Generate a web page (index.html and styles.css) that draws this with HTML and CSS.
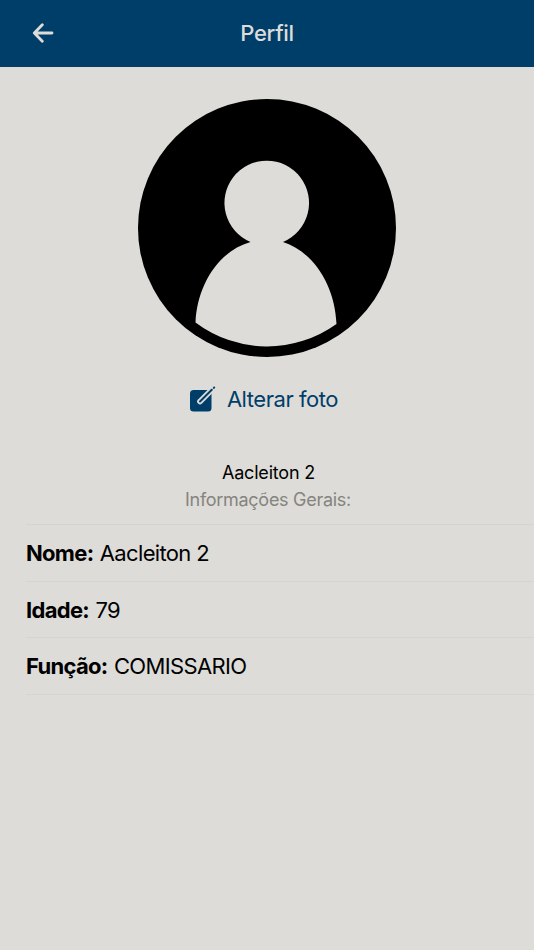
FILE: index.html
```html
<!DOCTYPE html>
<html lang="pt-BR">
<head>
<meta charset="utf-8">
<title>Perfil</title>
<link rel="stylesheet" href="styles.css">
</head>
<body>
<header class="toolbar">
  <button class="back" aria-label="Voltar">
    <svg width="22" height="20" viewBox="0 0 22 20"><path d="M10.300 1.800L2.300 10l8 8.200M2.800 10H20" fill="none" stroke="currentColor" stroke-width="2.800" stroke-linecap="round" stroke-linejoin="round"/></svg>
  </button>
  <h1 class="title">Perfil</h1>
</header>
<main>
  <svg class="avatar" viewBox="0 0 258 258">
    <circle class="disc" cx="129" cy="129" r="129"/>
    <path class="person" d="M112.500 143A42.300 42.300 0 1 1 145 143C176 153 197 187 198.500 225A119 119 0 0 1 57.500 223.500C59 187 80 152 112.500 143Z"/>
  </svg>
  <button class="change">
    <svg width="28" height="28" viewBox="0 0 28 28">
      <rect class="pad" x="1" y="5" width="21.500" height="21.600" rx="3.500"/>
      <path class="gap" d="M11 16.500L24 3.500"/>
      <path class="pencil" d="M11 16.500L22.800 4.700M24.800 2.900L25.200 2.500"/>
    </svg>
    <span>Alterar foto</span>
  </button>
  <div class="summary">
    <p class="name">Aacleiton 2</p>
    <p class="subtitle">Informações Gerais:</p>
  </div>
  <ul class="info">
    <li><b>Nome:</b> <span>Aacleiton 2</span></li>
    <li><b>Idade:</b> <span>79</span></li>
    <li><b>Função:</b> <span>COMISSARIO</span></li>
  </ul>
</main>
</body>
</html>
```

FILE: styles.css
```css
* { box-sizing: border-box; }
body { margin: 0; min-height: 950px; background: #dddcd8; color: #000; font-family: Inter, "Liberation Sans", sans-serif; }
button { border: 0; padding: 0; background: none; font: inherit; color: inherit; }
.toolbar { height: 67px; padding-bottom: 1px; display: grid; grid-template-columns: 86px 1fr 86px; align-items: center; background: #003e6a; color: #dddcd8; }
.back { display: flex; padding-left: 32px; }
.title { margin: 0; text-align: center; font-size: 22px; line-height: 28px; font-weight: 500; letter-spacing: -0.3px; }
main { display: flex; flex-direction: column; align-items: center; padding-top: 32px; }
.avatar { width: 258px; height: 258px; }
.disc { fill: #000; }
.person { fill: #dddcd8; }
.change { display: flex; align-items: center; gap: 10px; height: 32px; margin: 26px 7px 0 0; color: #003e6a; font-size: 22px; letter-spacing: -0.45px; }
.change span { padding-bottom: 1px; }
.pad { fill: currentColor; }
.gap { fill: none; stroke: #dddcd8; stroke-width: 5.600; stroke-linecap: round; }
.pencil { fill: none; stroke: currentColor; stroke-width: 2; stroke-linecap: round; }
.summary { margin-top: 44px; text-align: center; }
.summary p { margin: 0; font-size: 18px; line-height: 27px; }
.summary .name { padding-left: 3px; letter-spacing: -0.2px; }
.summary .subtitle { padding-left: 2px; color: #85847f; letter-spacing: -0.28px; }
.info { align-self: stretch; margin: 11px 0 0 26px; padding: 0; list-style: none; border-top: 1px solid #d4d4d1; }
.info li { height: 56.700px; display: flex; align-items: center; gap: 6.500px; border-bottom: 1px solid #d4d4d1; font-size: 22px; letter-spacing: -0.7px; }
.info span { letter-spacing: -0.65px; }
.info b { font-weight: 700; }
```
